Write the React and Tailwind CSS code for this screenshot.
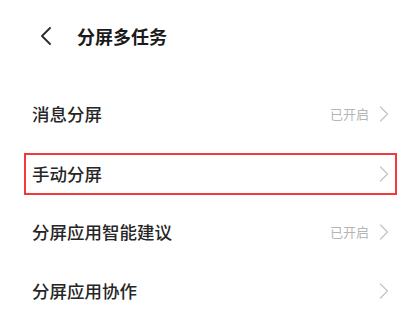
import React from 'react';

const ChevronRight = () => (
  <svg width="10" height="16" viewBox="0 0 10 16" fill="none" className="shrink-0">
    <polyline points="1.5,1 8.5,8 1.5,15" stroke="#c6c6c6" strokeWidth="1.4" strokeLinecap="round" strokeLinejoin="round" />
  </svg>
);

const BackIcon = () => (
  <svg width="16" height="18" viewBox="0 0 16 18" fill="none">
    <polyline points="13,1 5,9 13,17" stroke="#2a2a2a" strokeWidth="1.8" strokeLinecap="round" strokeLinejoin="round" />
  </svg>
);

const items = [
  { label: '消息分屏', status: '已开启' },
  { label: '手动分屏', status: '', highlight: true },
  { label: '分屏应用智能建议', status: '已开启' },
  { label: '分屏应用协作', status: '' },
];

const Row = ({ item }) => (
  <div className="flex w-full items-center justify-between">
    <span className="text-[17.5px] font-medium leading-none text-[#262626]">{item.label}</span>
    <div className="flex items-center gap-[10px]">
      {item.status && <span className="text-[13px] leading-none text-[#b5b5b5]">{item.status}</span>}
      <ChevronRight />
    </div>
  </div>
);

export default function App() {
  return (
    <div
      className="w-[417px] h-[327px] bg-white overflow-hidden"
      style={{ fontFamily: '"Noto Sans CJK SC", "Noto Sans", sans-serif' }}
    >
      <div className="h-[72px] flex items-center pl-[37px]">
        <BackIcon />
        <h1 className="ml-[24px] text-[18px] font-bold leading-none text-[#1a1a1a]">分屏多任务</h1>
      </div>

      <div className="mt-[12px] pl-[24px] pr-[20px]">
        {items.map((item) =>
          item.highlight ? (
            <div key={item.label} className="h-[59px] flex items-center">
              <div className="h-[42px] w-full mt-[3px] border-2 border-[#f23a3a] px-[6px] flex items-center">
                <Row item={item} />
              </div>
            </div>
          ) : (
            <div key={item.label} className="h-[59px] px-[8px] flex items-center">
              <Row item={item} />
            </div>
          )
        )}
      </div>
    </div>
  );
}
